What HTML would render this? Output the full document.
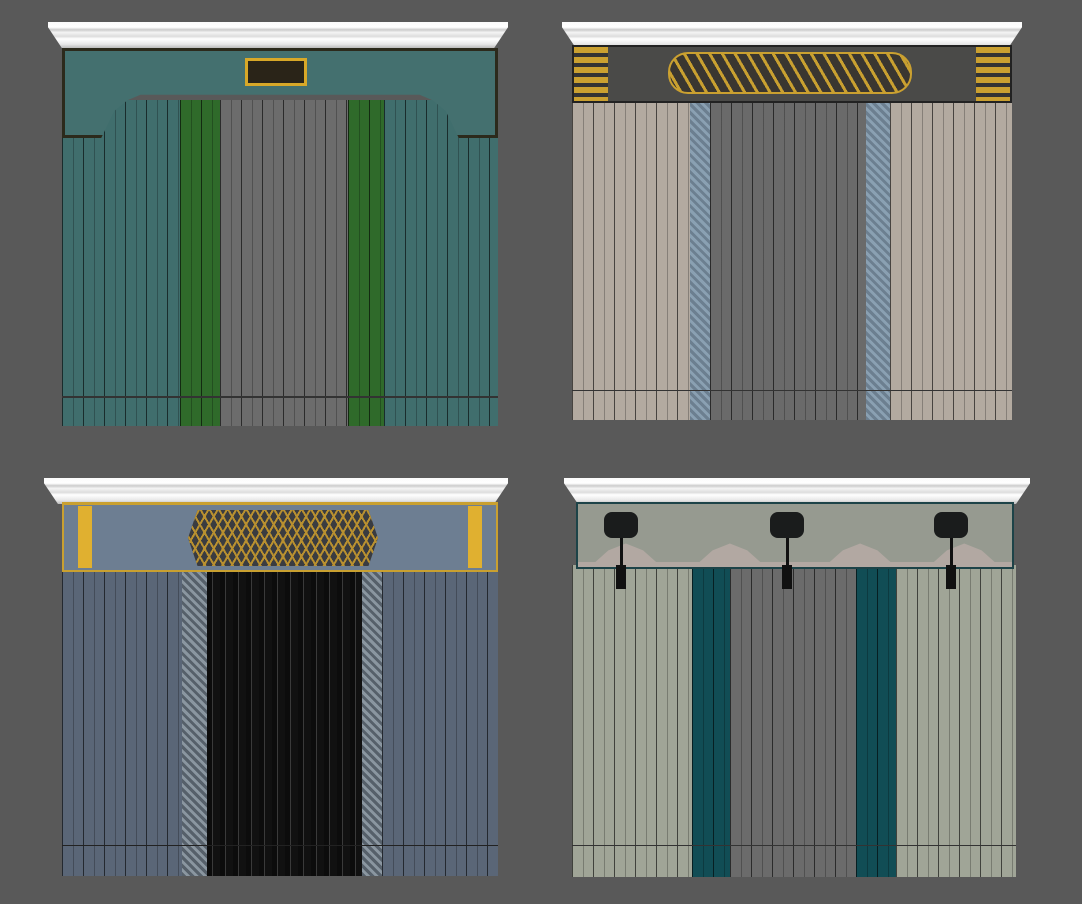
<!DOCTYPE html>
<html><head><style>
body{margin:0;width:1082px;height:904px;background:#595959;position:relative;overflow:hidden;font-family:"Liberation Sans",sans-serif}
div{position:absolute;box-sizing:border-box}
.corn{background:linear-gradient(#fafafa 0,#fff 20%,#ccc 30%,#f4f4f4 40%,#ddd 55%,#fff 65%,#e8e8e8 85%,#bbb 100%);clip-path:polygon(0 0,100% 0,100% 20%,97% 100%,3% 100%,0 20%)}
.f{background-image:repeating-linear-gradient(90deg,rgba(0,0,0,.6) 0 1px,transparent 1px 11px,rgba(0,0,0,.25) 11px 12px,transparent 12px 21px)}
</style></head><body>

<!-- 1 -->
<div class="corn" style="left:48px;top:22px;width:460px;height:26px"></div>
<div class="f" style="left:62px;top:100px;width:120px;height:326px;background-color:#406e6d"></div>
<div class="f" style="left:180px;top:100px;width:42px;height:326px;background-color:#2f6a2a"></div>
<div class="f" style="left:220px;top:100px;width:128px;height:326px;background-color:#6c6c6c"></div>
<div class="f" style="left:348px;top:100px;width:36px;height:326px;background-color:#2f6a2a"></div>
<div class="f" style="left:384px;top:100px;width:114px;height:326px;background-color:#406e6d"></div>
<div style="left:62px;top:396px;width:436px;height:2px;background:#333"></div>
<div style="left:62px;top:48px;width:436px;height:90px;background:#44706f;border:3px solid #2c2a1c;clip-path:polygon(0 0,100% 0,100% 100%,91% 100%,88% 70%,85% 58%,82% 52%,18% 52%,15% 58%,12% 70%,9% 100%,0 100%)"></div>
<div style="left:245px;top:58px;width:62px;height:28px;border:3px solid #d8a828;background:#2a2418"></div>

<!-- 2 -->
<div class="corn" style="left:562px;top:22px;width:460px;height:26px"></div>
<div class="f" style="left:572px;top:100px;width:120px;height:320px;background-color:#b3aaa0"></div>
<div style="left:690px;top:100px;width:22px;height:320px;background:repeating-linear-gradient(45deg,#6c7f90 0 3px,#8aa0b2 3px 6px)"></div>
<div class="f" style="left:710px;top:100px;width:156px;height:320px;background-color:#6a6a6a"></div>
<div style="left:866px;top:100px;width:24px;height:320px;background:repeating-linear-gradient(45deg,#6c7f90 0 3px,#8aa0b2 3px 6px)"></div>
<div class="f" style="left:890px;top:100px;width:122px;height:320px;background-color:#b3aaa0"></div>
<div style="left:572px;top:390px;width:440px;height:1px;background:#333"></div>
<div style="left:572px;top:45px;width:440px;height:58px;background:#4a4a48;border:2px solid #222"></div>
<div style="left:574px;top:47px;width:34px;height:54px;background:repeating-linear-gradient(#caa030 0 6px,#333 6px 10px)"></div>
<div style="left:976px;top:47px;width:34px;height:54px;background:repeating-linear-gradient(#caa030 0 6px,#333 6px 10px)"></div>
<div style="left:668px;top:52px;width:244px;height:42px;border-radius:20px;background:#3a3630;border:2px solid #caa030;background-image:repeating-linear-gradient(60deg,transparent 0 8px,#c9a030 8px 11px)"></div>

<!-- 3 -->
<div class="corn" style="left:44px;top:478px;width:464px;height:26px"></div>
<div class="f" style="left:62px;top:570px;width:120px;height:306px;background-color:#5a6677"></div>
<div style="left:182px;top:570px;width:26px;height:306px;background:repeating-linear-gradient(45deg,#56606a 0 3px,#8a96a0 3px 6px)"></div>
<div style="left:207px;top:570px;width:156px;height:306px;background:repeating-linear-gradient(90deg,#0c0c0c 0 5px,#3a3a3a 5px 6px,#111 6px 13px)"></div>
<div style="left:362px;top:570px;width:20px;height:306px;background:repeating-linear-gradient(45deg,#56606a 0 3px,#8a96a0 3px 6px)"></div>
<div class="f" style="left:382px;top:570px;width:116px;height:306px;background-color:#5a6677"></div>
<div style="left:62px;top:845px;width:436px;height:1px;background:#222"></div>
<div style="left:62px;top:502px;width:436px;height:70px;background:#6d7e92;border:2px solid #c9a030;border-top:3px solid #c9a030"></div>
<div style="left:78px;top:506px;width:14px;height:62px;background:#e0b030"></div>
<div style="left:468px;top:506px;width:14px;height:62px;background:#e0b030"></div>
<div style="left:188px;top:510px;width:190px;height:56px;background:#3a3c40;background-image:repeating-linear-gradient(60deg,transparent 0 6px,#b89030 6px 8px),repeating-linear-gradient(-60deg,transparent 0 6px,#b89030 6px 8px);clip-path:polygon(5% 0,95% 0,100% 50%,95% 100%,5% 100%,0 50%)"></div>

<!-- 4 -->
<div class="corn" style="left:564px;top:478px;width:466px;height:26px"></div>
<div class="f" style="left:572px;top:565px;width:120px;height:312px;background-color:#a0a597"></div>
<div class="f" style="left:692px;top:565px;width:38px;height:312px;background-color:#114d55"></div>
<div class="f" style="left:730px;top:565px;width:126px;height:312px;background-color:#6b6b6b"></div>
<div class="f" style="left:856px;top:565px;width:40px;height:312px;background-color:#114d55"></div>
<div class="f" style="left:896px;top:565px;width:120px;height:312px;background-color:#a0a597"></div>
<div style="left:572px;top:845px;width:444px;height:1px;background:#333"></div>
<div style="left:576px;top:502px;width:438px;height:67px;background:#b2a8a2;border:2px solid #1d4348"></div>
<div style="left:578px;top:504px;width:434px;height:58px;background:#969a90;clip-path:polygon(0 0,100% 0,100% 100%,96% 100%,93% 80%,89% 68%,85% 80%,82% 100%,72% 100%,69% 80%,65% 68%,61% 80%,58% 100%,42% 100%,39% 80%,35% 68%,31% 80%,28% 100%,18% 100%,15% 80%,11% 68%,7% 80%,4% 100%,0 100%)"></div>
<div style="left:604px;top:512px;width:34px;height:26px;background:#1a1c1c;border-radius:8px"></div>
<div style="left:770px;top:512px;width:34px;height:26px;background:#1a1c1c;border-radius:8px"></div>
<div style="left:934px;top:512px;width:34px;height:26px;background:#1a1c1c;border-radius:8px"></div>
<div style="left:620px;top:538px;width:3px;height:50px;background:#111"></div>
<div style="left:616px;top:565px;width:10px;height:24px;background:#111"></div>
<div style="left:786px;top:538px;width:3px;height:50px;background:#111"></div>
<div style="left:782px;top:565px;width:10px;height:24px;background:#111"></div>
<div style="left:950px;top:538px;width:3px;height:50px;background:#111"></div>
<div style="left:946px;top:565px;width:10px;height:24px;background:#111"></div>
</body></html>
